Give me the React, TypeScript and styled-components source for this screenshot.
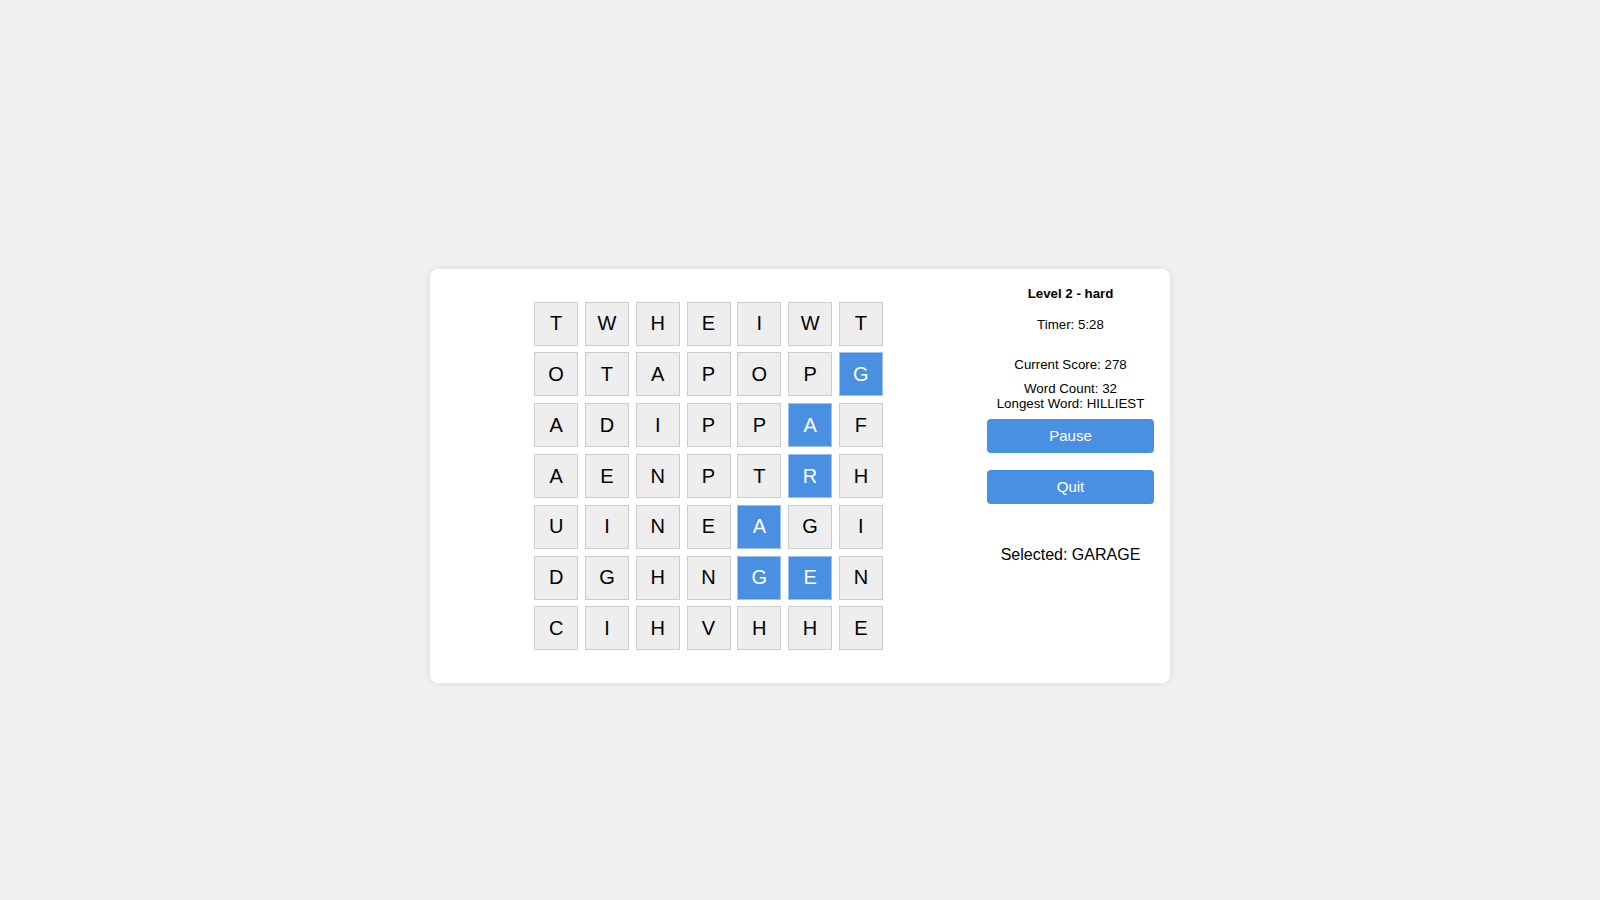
import React, { useState } from "react";
import styled, { createGlobalStyle } from "styled-components";

const GlobalStyle = createGlobalStyle`
  html, body {
    margin: 0;
    padding: 0;
    background: #f0f0f0;
    font-family: "Liberation Sans", Arial, sans-serif;
    color: #000;
  }
`;

const BOARD = [
  "TWHEIWT",
  "OTAPOPG",
  "ADIPPAF",
  "AENPTRH",
  "UINEAGI",
  "DGHNGEN",
  "CIHVHHE",
];

// path of the current selection (row, col)
const SELECTED: [number, number][] = [
  [5, 4],
  [4, 4],
  [3, 5],
  [2, 5],
  [1, 6],
  [5, 5],
];

export default function App() {
  const [paused, setPaused] = useState(false);
  const isSelected = (r: number, c: number) =>
    SELECTED.some(([sr, sc]) => sr === r && sc === c);

  return (
    <>
      <GlobalStyle />
      <Page>
        <Card>
          <BoardArea>
            <Grid>
              {BOARD.map((row, r) =>
                row.split("").map((ch, c) => (
                  <Tile key={`${r}-${c}`} $active={isSelected(r, c)}>
                    {ch}
                  </Tile>
                ))
              )}
            </Grid>
          </BoardArea>
          <Panel>
            <Title>Level 2 - hard</Title>
            <Timer>Timer: 5:28</Timer>
            <Score>Current Score: 278</Score>
            <Stats>
              <div>Word Count: 32</div>
              <div>Longest Word: HILLIEST</div>
            </Stats>
            <Button onClick={() => setPaused(!paused)}>
              {paused ? "Resume" : "Pause"}
            </Button>
            <Button $spaced>Quit</Button>
            <Selected>Selected: GARAGE</Selected>
          </Panel>
        </Card>
      </Page>
    </>
  );
}

const Page = styled.div`
  min-height: 100vh;
  box-sizing: border-box;
  padding-top: 52px;
  display: flex;
  align-items: center;
  justify-content: center;
`;

const Card = styled.div`
  width: 740px;
  box-sizing: border-box;
  background: #fff;
  border-radius: 8px;
  box-shadow: 0 0 6px rgba(0, 0, 0, 0.1);
  padding: 16px;
  display: flex;
  gap: 16px;
`;

const BoardArea = styled.div`
  flex: 1;
  display: flex;
  justify-content: center;
  padding: 17px 0;
`;

const Grid = styled.div`
  display: grid;
  grid-template-columns: repeat(7, 44px);
  grid-auto-rows: 44px;
  gap: 6.8px;
`;

const Tile = styled.div<{ $active?: boolean }>`
  box-sizing: border-box;
  display: flex;
  align-items: center;
  justify-content: center;
  font-size: 20px;
  border: 1px solid ${(p) => (p.$active ? "#9fc0ea" : "#cccccc")};
  background: ${(p) => (p.$active ? "#4a90e2" : "#eeeeee")};
  color: ${(p) => (p.$active ? "#fff" : "#000")};
  cursor: pointer;
  user-select: none;
`;

const Panel = styled.div`
  width: 167px;
  padding-top: 1px;
  display: flex;
  flex-direction: column;
  align-items: stretch;
  text-align: center;
  font-size: 13.3px;
  line-height: 15px;
`;

const Title = styled.div`
  font-weight: bold;
`;

const Timer = styled.div`
  margin-top: 16px;
`;

const Score = styled.div`
  margin-top: 25px;
`;

const Stats = styled.div`
  margin-top: 9px;
`;

const Button = styled.button<{ $spaced?: boolean }>`
  margin-top: ${(p) => (p.$spaced ? "17px" : "8px")};
  height: 34px;
  border: none;
  border-radius: 4px;
  background: #4a90e2;
  color: #fff;
  font-family: "Liberation Sans", Arial, sans-serif;
  font-size: 15px;
  cursor: pointer;
`;

const Selected = styled.div`
  margin-top: 42px;
  font-size: 16px;
  line-height: 18px;
`;
